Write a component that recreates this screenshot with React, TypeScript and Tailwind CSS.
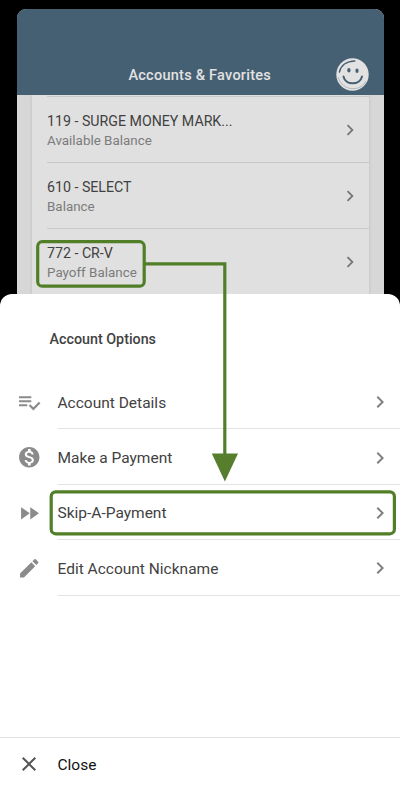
import React from "react";

const CHEVRON = "M10 6 8.59 7.41 13.17 12l-4.58 4.59L10 18l6-6z";

function Glyph({ d, className }: { d: string; className: string }) {
  return (
    <svg viewBox="0 0 24 24" fill="currentColor" className={className}>
      <path d={d} />
    </svg>
  );
}

const accounts = [
  { name: "119 - SURGE MONEY MARK...", label: "Available Balance" },
  { name: "610 - SELECT", label: "Balance" },
  { name: "772 - CR-V", label: "Payoff Balance" },
];

const options = [
  {
    text: "Account Details",
    icon: "M14 10H2v2h12v-2zm0-4H2v2h12V6zM2 16h8v-2H2v2zm19.5-4.5L23 13l-6.99 7-4.51-4.5L13 14l3.01 3 5.49-5.5z",
  },
  {
    text: "Make a Payment",
    icon: "M12 2C6.48 2 2 6.48 2 12s4.48 10 10 10 10-4.48 10-10S17.52 2 12 2zm1.41 16.09V20h-2.67v-1.93c-1.71-.36-3.16-1.46-3.27-3.4h1.96c.1 1.05.82 1.87 2.65 1.87 1.96 0 2.4-.98 2.4-1.59 0-.83-.44-1.61-2.67-2.14-2.48-.6-4.18-1.62-4.18-3.67 0-1.72 1.39-2.84 3.11-3.21V4h2.67v1.95c1.86.45 2.79 1.86 2.85 3.39H14.3c-.05-1.11-.64-1.87-2.22-1.87-1.5 0-2.4.68-2.4 1.64 0 .84.65 1.39 2.67 1.91s4.18 1.39 4.18 3.91c-.01 1.83-1.38 2.83-3.12 3.16z",
  },
  { text: "Skip-A-Payment", icon: "M4 18l8.500-6L4 6v12zm9-12v12l8.500-6L13 6z" },
  {
    text: "Edit Account Nickname",
    icon: "M3 17.250V21h3.750L17.810 9.940l-3.750-3.750L3 17.250zM20.710 7.040a.996.996 0 0 0 0-1.410l-2.340-2.340a.996.996 0 0 0-1.410 0l-1.830 1.830 3.750 3.750 1.830-1.830z",
  },
];

function Smiley() {
  return (
    <svg viewBox="0 0 33 33" className="h-[33px] w-[33px]" fill="none" strokeLinecap="round">
      <circle cx="16.500" cy="16.500" r="16.200" fill="#e2e2e2" />
      <path d="M3.400 14C4.800 7.500 10.500 3.200 18.800 3" stroke="#466073" strokeWidth="1.500" />
      <path d="M2.200 19.500C4.500 26.500 10 30.700 17 30.700c6 0 10.500-3 12.500-7" stroke="#8d9ca7" strokeWidth=".6" />
      <ellipse cx="12.900" cy="12.300" rx="1.600" ry="2.200" fill="#466073" />
      <ellipse cx="21" cy="12.700" rx="1.600" ry="2.200" fill="#466073" />
      <path d="M7.500 18.500c1.800 9.100 16.500 9.100 18.500 0" stroke="#466073" strokeWidth="2" />
    </svg>
  );
}

function Annotations() {
  return (
    <svg
      viewBox="0 0 400 800"
      className="pointer-events-none absolute inset-0 h-[800px] w-[400px]"
      fill="none"
      stroke="#507f28"
      strokeWidth="3.200"
    >
      <rect x="37.700" y="241.700" width="106.500" height="44.500" rx="4.500" />
      <path d="M145 263.800h79.800V455" />
      <path d="M211.800 453.400h26.200l-13.100 28.200z" fill="#567e2d" stroke="none" />
      <rect x="51.200" y="491.900" width="343.200" height="41.900" rx="4.500" />
    </svg>
  );
}

export default function App() {
  return (
    <div className="relative flex h-[800px] w-[400px] flex-col overflow-hidden bg-black font-['Roboto','Liberation_Sans',sans-serif]">
      <div className="ml-[17px] mt-[9px] flex h-[285px] w-[367px] shrink-0 flex-col overflow-hidden rounded-t-[9px] bg-[#d7d7d7]">
        <header className="relative z-10 flex h-[86px] shrink-0 items-end justify-end bg-[#466073] pb-1 pr-[15px]">
          <h1 className="mb-[5px] mr-[65px] whitespace-nowrap text-[14.5px] font-medium leading-5 tracking-[0.25px] text-[#e2e2e2]">
            Accounts &amp; Favorites
          </h1>
          <Smiley />
        </header>
        <div className="ml-[15px] mr-[15px] flex grow flex-col bg-[#e0e0e0] pl-[15px] shadow-[0_0_3px_#bdbdbd]">
          <div className="h-[2px] shrink-0 border-b border-[#c8c8c8]" />
          {accounts.map((a) => (
            <div
              key={a.name}
              className="flex h-[66px] shrink-0 items-center justify-between border-b border-[#c8c8c8] pr-2"
            >
              <div className="whitespace-nowrap pt-[2px]">
                <div className="text-[14.2px] leading-5 text-[#414141]">{a.name}</div>
                <div className="text-[13.4px] leading-[19px] text-[#7b7b7b]">{a.label}</div>
              </div>
              <Glyph d={CHEVRON} className="h-[22px] w-[22px] text-[#777]" />
            </div>
          ))}
        </div>
      </div>

      <section className="flex grow flex-col rounded-t-[12px] bg-white">
        <h2 className="mb-[25px] ml-[49.5px] mt-[35px] text-[14.3px] font-medium leading-5 text-[#424242]">
          Account Options
        </h2>
        {options.map((o) => (
          <div key={o.text} className="flex h-[55.4px] shrink-0 items-center">
            <Glyph d={o.icon} className="ml-[16.5px] mt-px h-[24.5px] w-[24.5px] shrink-0 text-[#8b8b8b]" />
            <div className="ml-[16.5px] flex h-full grow items-center justify-between border-b border-[#e2e2e2] pr-2">
              <span className="pt-[3px] text-[15.5px] leading-6 text-[#424242]">{o.text}</span>
              <Glyph d={CHEVRON} className="mt-[2px] h-6 w-6 text-[#808080]" />
            </div>
          </div>
        ))}
        <footer className="mt-auto flex h-[63px] shrink-0 items-start border-t border-[#e2e2e2] pt-[14px]">
          <Glyph
            d="M19 6.410 17.590 5 12 10.590 6.410 5 5 6.410 10.590 12 5 17.590 6.410 19 12 13.410 17.590 19 19 17.590 13.410 12z"
            className="ml-[17px] h-6 w-6 text-[#555]"
          />
          <span className="ml-[16.5px] pt-px text-[15.5px] leading-6 text-[#111]">Close</span>
        </footer>
      </section>
      <Annotations />
    </div>
  );
}
